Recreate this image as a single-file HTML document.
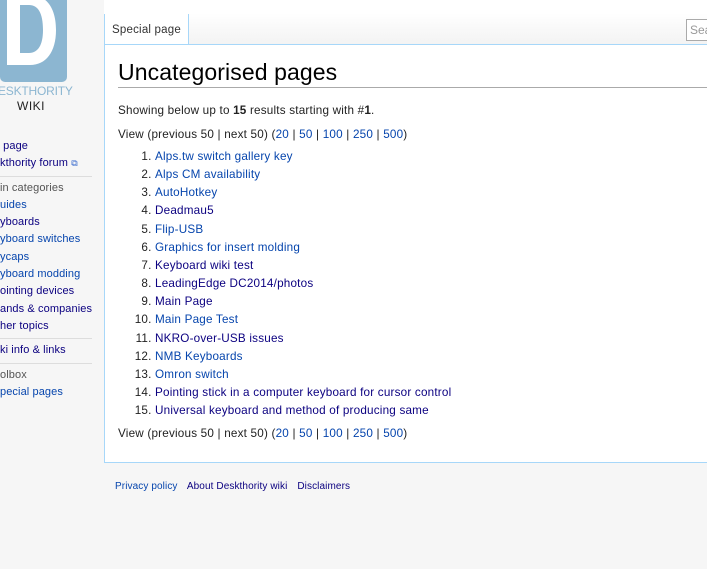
<!DOCTYPE html>
<html><head><meta charset="utf-8"><style>
body{margin:0;width:707px;height:569px;background:#f6f6f6;font-family:"Liberation Sans",sans-serif;position:relative;overflow:hidden}
a{text-decoration:none;color:#0645ad}
.v{color:#0b0080}
#logo{position:absolute;left:0;top:0}
.lt{position:absolute;font-size:12px}
#side{position:absolute;left:0;top:138px;font-size:11px;line-height:17.3px;width:92px;letter-spacing:0.1px}
#side div{white-space:nowrap;overflow:hidden}
#side .h{color:#555}
#side hr{border:0;border-top:1px solid #ddd;margin:3px 0 3px 0;width:92px}
#tabbar{position:absolute;left:104px;top:0;right:0;height:44px;background:linear-gradient(#fff 30%,#f3f3f3)}
#tab{position:absolute;left:104px;top:14px;width:83px;height:30px;background:#fff;border-left:1px solid #a7d7f9;border-right:1px solid #a7d7f9;font-size:11.5px;color:#333;text-align:center;line-height:33px;letter-spacing:0.2px}
#search{position:absolute;left:686px;top:19px;width:30px;height:20px;border:1px solid #aaa;background:#fff;font-size:12px;color:#999;line-height:20px;padding-left:3px}
#content{position:absolute;left:104px;top:44px;right:0;height:417px;background:#fff;border-top:1px solid #a7d7f9;border-left:1px solid #a7d7f9;border-bottom:1px solid #a7d7f9;font-size:11.7px;letter-spacing:0.2px;color:#222}
h1{position:absolute;left:13px;top:14px;margin:0;font-weight:normal;font-size:23px;letter-spacing:0.1px;width:600px;border-bottom:1px solid #aaa;padding-bottom:1px;color:#000}
.p{position:absolute;left:13px}
ol{position:absolute;left:13px;top:103px;margin:0;padding-left:37px;line-height:18.15px}
#foot{position:absolute;left:115px;top:481px;font-size:10px;letter-spacing:0.1px}
#foot a{margin-right:7px}
</style></head><body>
<svg id="logo" width="70" height="84" viewBox="0 0 70 84">
<rect x="0" y="-10" width="67" height="92" rx="5" fill="#8cb6d1"/>
<path d="M7 -5 H30 C48 -5 56 10 56 30 C56 52 46 65 30 65 H7 Z M20 5 V53 H29 C38 53 43 45 43 30 C43 13 38 5 29 5 Z" fill="#fff" fill-rule="evenodd"/>
</svg>
<div class="lt" style="left:-2px;top:84px;color:#8cb6d1;font-size:12px;letter-spacing:-0.2px">ESKTHORITY</div>
<div class="lt" style="left:17px;top:99px;color:#222;font-size:12px;letter-spacing:0.5px">WIKI</div>
<div id="side">
<div><a class="v">&nbsp;page</a></div>
<div><a class="v">kthority forum</a> <span style="color:#36c;font-size:9px">⧉</span></div>
<hr>
<div class="h">in categories</div>
<div><a>uides</a></div>
<div><a class="v">yboards</a></div>
<div><a>yboard switches</a></div>
<div><a>ycaps</a></div>
<div><a>yboard modding</a></div>
<div><a class="v">ointing devices</a></div>
<div><a class="v">ands &amp; companies</a></div>
<div><a class="v">her topics</a></div>
<hr>
<div><a class="v">ki info &amp; links</a></div>
<hr>
<div class="h">olbox</div>
<div><a>pecial pages</a></div>
</div>
<div id="tabbar"></div>
<div id="tab">Special page</div>
<div id="search">Sea</div>
<div id="content">
<h1>Uncategorised pages</h1>
<div class="p" style="top:59px">Showing below up to <b>15</b> results starting with #<b>1</b>.</div>
<div class="p" style="top:83px">View (previous 50 | next 50) (<a>20</a> | <a>50</a> | <a>100</a> | <a>250</a> | <a>500</a>)</div>
<ol>
<li><a>Alps.tw switch gallery key</a></li>
<li><a>Alps CM availability</a></li>
<li><a>AutoHotkey</a></li>
<li><a class="v">Deadmau5</a></li>
<li><a>Flip-USB</a></li>
<li><a>Graphics for insert molding</a></li>
<li><a class="v">Keyboard wiki test</a></li>
<li><a class="v">LeadingEdge DC2014/photos</a></li>
<li><a class="v">Main Page</a></li>
<li><a>Main Page Test</a></li>
<li><a class="v">NKRO-over-USB issues</a></li>
<li><a>NMB Keyboards</a></li>
<li><a>Omron switch</a></li>
<li><a class="v">Pointing stick in a computer keyboard for cursor control</a></li>
<li><a class="v">Universal keyboard and method of producing same</a></li>
</ol>
<div class="p" style="top:382px">View (previous 50 | next 50) (<a>20</a> | <a>50</a> | <a>100</a> | <a>250</a> | <a>500</a>)</div>
</div>
<div id="foot"><a>Privacy policy</a> <a class="v">About Deskthority wiki</a> <a class="v">Disclaimers</a></div>
</body></html>
